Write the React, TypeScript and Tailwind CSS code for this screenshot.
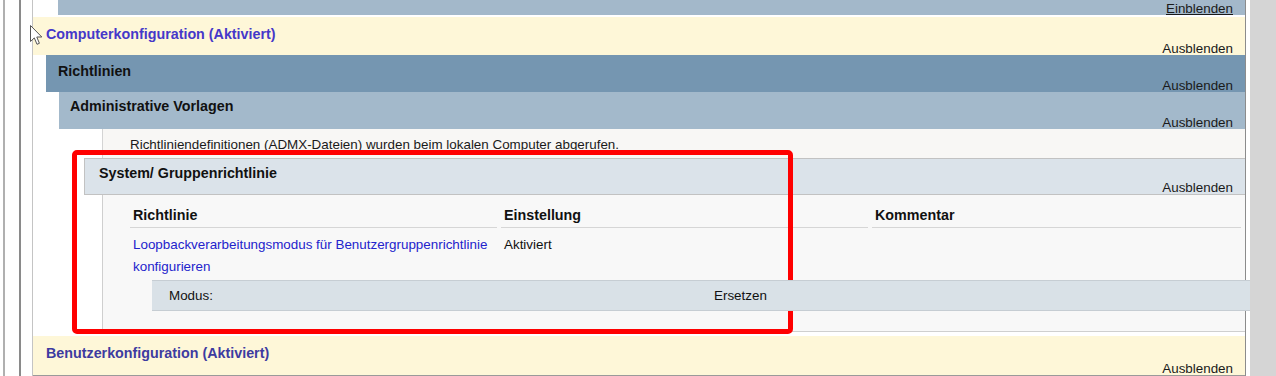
import React from 'react';

const Toggle: React.FC<{ label?: string; underline?: boolean }> = ({ label = 'Ausblenden', underline }) => (
  <div className={`mt-auto self-end pr-[12px] leading-[13px] text-[#1a1a1a] ${underline ? 'underline' : ''}`}>{label}</div>
);

const SectionHeader: React.FC<{ title: string; className: string; titleClass: string; pt: string; h: string }> = ({
  title,
  className,
  titleClass,
  pt,
  h,
}) => (
  <div className={`flex flex-col ${h} ${className}`}>
    <div className={`${pt} text-[14.3px] leading-[16px] font-bold ${titleClass}`}>{title}</div>
    <Toggle />
  </div>
);

const Cursor: React.FC = () => (
  <svg className="absolute left-[30px] top-[25px]" width="13" height="21" viewBox="0 0 13 21">
    <path d="M0.5 0.5 L0.5 16.5 L4.3 12.9 L7 19.3 L9.4 18.3 L6.8 12 L11.8 12 Z" fill="#ffffff" stroke="#555555" strokeWidth="1" />
  </svg>
);

const App: React.FC = () => {
  return (
    <div className="relative flex h-[376px] w-[1276px] overflow-hidden bg-white font-['Liberation_Sans',Arial,sans-serif] text-[13.4px] text-[#111]">
      {/* left gutter */}
      <div className="flex w-[33px] shrink-0">
        <div className="w-[3px]" />
        <div className="w-[2px] bg-[#b0b0b0]" />
        <div className="w-[14px]" />
        <div className="w-[2px] bg-[#8a8a8a]" />
        <div className="w-[11px]" />
        <div className="w-px bg-[#c4c4c4]" />
      </div>

      {/* report column */}
      <div className="flex w-[1213px] shrink-0 flex-col border-r border-[#8c8c8c]">
        <div className="ml-[25px] flex h-[15px] shrink-0 flex-col bg-[#a3b8ca]">
          <Toggle label="Einblenden" underline />
        </div>
        <div className="h-[2px] shrink-0" />

        {/* Computerkonfiguration */}
        <SectionHeader
          title="Computerkonfiguration (Aktiviert)"
          className="shrink-0 bg-[#fef7d8]"
          titleClass="pl-[13px] text-[#4538c9]"
          pt="pt-[9px]"
          h="h-[38px]"
        />
        <div className="ml-[13px] flex shrink-0 flex-col">
          <SectionHeader title="Richtlinien" className="bg-[#7596b1]" titleClass="pl-[12px]" pt="pt-[8px]" h="h-[37px]" />
          <div className="ml-[13px] flex flex-col">
            <SectionHeader
              title="Administrative Vorlagen"
              className="bg-[#a3b9cb]"
              titleClass="pl-[11px]"
              pt="pt-[6px]"
              h="h-[37px]"
            />
            <div className="flex flex-col pl-[25px]">
              <div className="ml-[18px] h-[29px] border-l border-[#d4d4d4] bg-[#f8f7f5] pl-[27px] pt-[8px] leading-[16px] text-[#1a1a1a]">
                Richtliniendefinitionen (ADMX-Dateien) wurden beim lokalen Computer abgerufen.
              </div>

              {/* System/ Gruppenrichtlinie */}
              <SectionHeader
                title="System/ Gruppenrichtlinie"
                className="border-y border-l border-[#c2c2c2] bg-[#dbe3ea]"
                titleClass="pl-[14px]"
                pt="pt-[6px]"
                h="h-[37px]"
              />
              <div className="ml-[18px] flex h-[137px] flex-col border-b border-l border-[#cfcfcf] bg-[#f8f8f8]">
                <div className="grid grid-cols-[371px_371px_370px] pl-[27px] pt-[10px]">
                  <div className="mr-[4px] h-[23px] border-b border-[#d6d6d6] pl-[3px] text-[14.3px] font-bold leading-[21px]">Richtlinie</div>
                  <div className="mr-[4px] h-[23px] border-b border-[#d6d6d6] pl-[3px] text-[14.3px] font-bold leading-[21px]">Einstellung</div>
                  <div className="mr-[1px] h-[23px] border-b border-[#d6d6d6] pl-[3px] text-[14.3px] font-bold leading-[21px]">Kommentar</div>
                  <div className="pl-[3px] pr-[8px] pt-[6px] leading-[22px] text-[#2323cc]">
                    Loopbackverarbeitungsmodus für Benutzergruppenrichtlinie konfigurieren
                  </div>
                  <div className="pl-[3px] pt-[6px] leading-[22px]">Aktiviert</div>
                  <div />
                </div>
                <div className="relative z-10 -mr-[5px] ml-[49px] mt-[2px] flex h-[31px] border-y border-[#c6cdd3] bg-[#d9e1e7] leading-[29px]">
                  <div className="w-[562px] pl-[17px]">Modus:</div>
                  <div>Ersetzen</div>
                </div>
              </div>
            </div>
          </div>
        </div>
        <div className="h-[4px] shrink-0" />

        {/* Benutzerkonfiguration */}
        <SectionHeader
          title="Benutzerkonfiguration (Aktiviert)"
          className="shrink-0 border-b border-[#9a9a9a] bg-[#fef7d8]"
          titleClass="pl-[13px] text-[#3d3ba0]"
          pt="pt-[9px]"
          h="h-[40px]"
        />
      </div>

      <div className="w-[4px] shrink-0 bg-white" />
      <div className="flex-1 bg-[#d5d5d5]" />

      {/* annotation frame */}
      <div className="pointer-events-none absolute left-[72px] top-[150px] h-[184px] w-[721px] rounded-[5px] border-[5px] border-[#ff0000]" />
      <Cursor />
    </div>
  );
};

export default App;
